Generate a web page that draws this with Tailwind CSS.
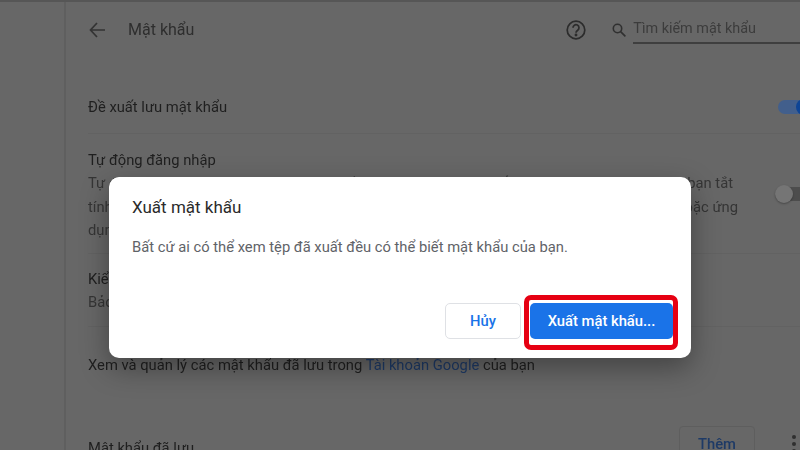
<!DOCTYPE html>
<html lang="en">
<head>
  <meta charset="UTF-8">
  <title>Mật khẩu</title>
  <script src="https://cdn.jsdelivr.net/npm/@tailwindcss/browser@4"></script>
</head>
<body class="relative w-[800px] h-[450px] overflow-hidden bg-[#676767] font-['Roboto',sans-serif] text-[14.75px] text-[#1f1f1f]">
  <!-- dark strip along the top of the window -->
  <div class="h-[2px] bg-[#565656]"></div>

  <!-- settings page, already dimmed -->
  <div class="h-[448px] ml-[64px] pl-[22px] border-l-2 border-[#5f5f5f] blur-[0.3px]">
    <header class="flex items-center h-[55px] whitespace-nowrap text-[#2e2e2e]">
      <svg class="shrink-0 w-[16px] h-[16px] ml-[1px] text-[#333]" viewBox="0 0 16 16" fill="none" stroke="currentColor" stroke-width="1.7">
        <path d="M16 8H1.5M8 1L1.5 8 8 15"/>
      </svg>
      <h1 class="ml-[23px] text-[16px]">Mật khẩu</h1>
      <svg class="shrink-0 ml-[371px] w-[22px] h-[22px] text-[#2c2c2c]" viewBox="0 0 22 22" fill="none" stroke="currentColor" stroke-width="1.7">
        <circle cx="11" cy="11" r="8.8"/>
        <path d="M8 8.8a3 3 0 1 1 4.7 2.4c-1 .7-1.7 1.2-1.7 2.6"/>
        <circle cx="11" cy="16" r="0.6" fill="currentColor"/>
      </svg>
      <svg class="shrink-0 ml-[25px] w-[14px] h-[14px] text-[#303030]" viewBox="0 0 14 14" fill="none" stroke="currentColor" stroke-width="1.6">
        <circle cx="5.5" cy="5.5" r="4.2"/>
        <path d="M8.6 8.6L13.4 13.4"/>
      </svg>
      <div class="ml-[7px] w-[167px] h-[29px] pt-[3px] border-b-2 border-[#3f3f3f] text-[#3c3c3c] text-[14.4px]">Tìm kiếm mật khẩu</div>
    </header>

    <section class="flex items-center justify-between h-[77px] pt-[24px] border-b border-[#626262]">
      <span>Đề xuất lưu mật khẩu</span>
      <div class="relative w-[22px] h-[14px]">
        <div class="w-[22px] h-[14px] rounded-l-full bg-[#425f8c]"></div>
        <div class="absolute left-[18px] top-[-1px] w-[16px] h-[16px] rounded-full bg-[#0e4596]"></div>
      </div>
    </section>

    <section class="flex justify-between h-[120px] pt-[15px] border-b border-[#626262]">
      <div class="w-[645px] leading-[23.3px] whitespace-nowrap">
        <div>Tự động đăng nhập</div>
        <div class="flex justify-between text-[#353535]"><span>Tự động đăng nhập vào các trang web bằng thông tin đã lưu. Nếu</span><span>bạn tắt</span></div>
        <div class="flex justify-between text-[#353535] w-[650px]"><span>tính năng này, bạn sẽ được yêu cầu xác minh trước khi đăng nhập vào</span><span>hoặc ứng</span></div>
        <div class="text-[#353535]">dụng</div>
      </div>
      <div class="relative w-[25px] h-[14px] mt-[38px] rounded-l-full bg-[#4d4d4d]">
        <div class="absolute left-[0px] top-[-2px] w-[18px] h-[18px] rounded-full bg-[#757575] shadow-[0_1px_2px_rgba(0,0,0,0.3)]"></div>
      </div>
    </section>

    <section class="h-[73px] pt-[14px] leading-[23.3px] border-b border-[#626262]">
      <div>Kiểm tra mật khẩu</div>
      <div class="text-[#353535]">Bảo vệ mật khẩu của bạn khỏi các vi phạm dữ liệu</div>
    </section>

    <section class="h-[80px] pt-[27px] leading-[23.3px]">
      Xem và quản lý các mật khẩu đã lưu trong <a class="text-[#1e3a66]">Tài khoản Google</a> của bạn
    </section>

    <section class="flex items-start h-[60px]">
      <span class="mt-[30px]">Mật khẩu đã lưu</span>
      <div class="ml-auto w-[76px] h-[36px] mt-[19px] flex items-center justify-center rounded-[4px] border border-[#5e5e5e] font-medium text-[#1e3a66]">Thêm</div>
      <div class="ml-[37px] mr-[4px] mt-[28px] flex flex-col gap-[3px]">
        <i class="block w-[4px] h-[4px] rounded-full bg-[#2f2f2f]"></i>
        <i class="block w-[4px] h-[4px] rounded-full bg-[#2f2f2f]"></i>
        <i class="block w-[4px] h-[4px] rounded-full bg-[#2f2f2f]"></i>
      </div>
    </section>
  </div>

  <!-- export dialog -->
  <div class="absolute left-[109px] top-[177px] w-[582px] h-[181px] rounded-[10px] bg-white shadow-[0_10px_28px_rgba(0,0,0,0.35)] flex flex-col">
    <h2 class="mt-[18px] ml-[23px] text-[17px] text-[#2b2b2b]">Xuất mật khẩu</h2>
    <p class="mt-[15px] ml-[23px] text-[14.75px] text-[#5f6368]">Bất cứ ai có thể xem tệp đã xuất đều có thể biết mật khẩu của bạn.</p>
    <div class="mt-auto mb-[19px] mr-[18px] flex justify-end gap-[9px]">
      <button class="w-[76px] h-[36px] rounded-[5px] border border-[#dfe1e5] bg-white font-medium text-[#1a73e8]">Hủy</button>
      <button class="w-[143px] h-[36px] rounded-[5px] bg-[#1a73e8] font-medium text-white">Xuất mật khẩu...</button>
    </div>
    <!-- red annotation round the confirm button -->
    <div class="absolute left-[415px] top-[118px] w-[154px] h-[55px] rounded-[7px] border-[5px] border-[#e60012]"></div>
  </div>
</body>
</html>
